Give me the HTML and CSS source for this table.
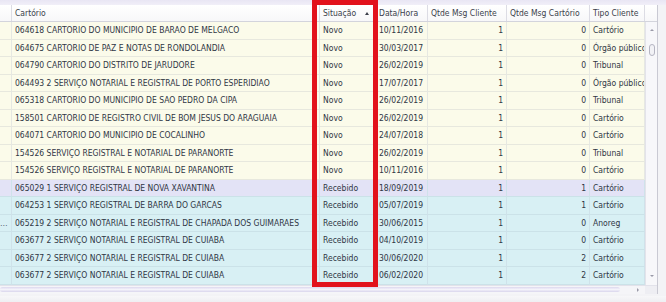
FILE: index.html
```html
<!DOCTYPE html>
<html lang="pt">
<head>
<meta charset="utf-8">
<title>Cartórios</title>
<link rel="stylesheet" href="styles.css">
</head>
<body>
<div class="screen">
  <div class="topbar"></div>
  <div class="panel">
    <div class="row head">
      <div class="c gut"></div>
      <div class="c">Cartório</div>
      <div class="c sort">Situação<span class="arrow"></span></div>
      <div class="c">Data/Hora</div>
      <div class="c">Qtde Msg Cliente</div>
      <div class="c">Qtde Msg Cartório</div>
      <div class="c">Tipo Cliente</div>
      <div class="c corner"></div>
    </div>
    <div class="bodywrap">
      <div class="rows">
        <div class="row novo"><div class="c gut"></div><div class="c">064618 CARTORIO DO MUNICIPIO DE BARAO DE MELGACO</div><div class="c">Novo</div><div class="c">10/11/2016</div><div class="c num">1</div><div class="c num">0</div><div class="c">Cartório</div></div>
        <div class="row novo"><div class="c gut"></div><div class="c">064675 CARTORIO DE PAZ E NOTAS DE RONDOLANDIA</div><div class="c">Novo</div><div class="c">30/03/2017</div><div class="c num">1</div><div class="c num">0</div><div class="c">Órgão público</div></div>
        <div class="row novo"><div class="c gut"></div><div class="c">064790 CARTORIO DO DISTRITO DE JARUDORE</div><div class="c">Novo</div><div class="c">26/02/2019</div><div class="c num">1</div><div class="c num">0</div><div class="c">Tribunal</div></div>
        <div class="row novo"><div class="c gut"></div><div class="c">064493 2 SERVIÇO NOTARIAL E REGISTRAL DE PORTO ESPERIDIAO</div><div class="c">Novo</div><div class="c">17/07/2017</div><div class="c num">1</div><div class="c num">0</div><div class="c">Órgão público</div></div>
        <div class="row novo"><div class="c gut"></div><div class="c">065318 CARTORIO DO MUNICIPIO DE SAO PEDRO DA CIPA</div><div class="c">Novo</div><div class="c">26/02/2019</div><div class="c num">1</div><div class="c num">0</div><div class="c">Tribunal</div></div>
        <div class="row novo"><div class="c gut"></div><div class="c">158501 CARTORIO DE REGISTRO CIVIL DE BOM JESUS DO ARAGUAIA</div><div class="c">Novo</div><div class="c">26/02/2019</div><div class="c num">1</div><div class="c num">0</div><div class="c">Cartório</div></div>
        <div class="row novo"><div class="c gut"></div><div class="c">064071 CARTORIO DO MUNICIPIO DE COCALINHO</div><div class="c">Novo</div><div class="c">24/07/2018</div><div class="c num">1</div><div class="c num">0</div><div class="c">Cartório</div></div>
        <div class="row novo"><div class="c gut"></div><div class="c">154526 SERVIÇO REGISTRAL E NOTARIAL DE PARANORTE</div><div class="c">Novo</div><div class="c">26/02/2019</div><div class="c num">1</div><div class="c num">0</div><div class="c">Tribunal</div></div>
        <div class="row novo"><div class="c gut"></div><div class="c">154526 SERVIÇO REGISTRAL E NOTARIAL DE PARANORTE</div><div class="c">Novo</div><div class="c">10/11/2016</div><div class="c num">1</div><div class="c num">0</div><div class="c">Cartório</div></div>
        <div class="row sel"><div class="c gut"></div><div class="c">065029 1 SERVIÇO REGISTRAL DE NOVA XAVANTINA</div><div class="c">Recebido</div><div class="c">18/09/2019</div><div class="c num">1</div><div class="c num">1</div><div class="c">Cartório</div></div>
        <div class="row rec"><div class="c gut"></div><div class="c">064253 1 SERVIÇO REGISTRAL DE BARRA DO GARCAS</div><div class="c">Recebido</div><div class="c">05/07/2019</div><div class="c num">1</div><div class="c num">1</div><div class="c">Cartório</div></div>
        <div class="row rec"><div class="c gut">…</div><div class="c">065219 2 SERVIÇO NOTARIAL E REGISTRAL DE CHAPADA DOS GUIMARAES</div><div class="c">Recebido</div><div class="c">30/06/2015</div><div class="c num">1</div><div class="c num">0</div><div class="c">Anoreg</div></div>
        <div class="row rec"><div class="c gut"></div><div class="c">063677 2 SERVIÇO NOTARIAL E REGISTRAL DE CUIABA</div><div class="c">Recebido</div><div class="c">04/10/2019</div><div class="c num">1</div><div class="c num">0</div><div class="c">Cartório</div></div>
        <div class="row rec"><div class="c gut"></div><div class="c">063677 2 SERVIÇO NOTARIAL E REGISTRAL DE CUIABA</div><div class="c">Recebido</div><div class="c">30/06/2020</div><div class="c num">1</div><div class="c num">2</div><div class="c">Cartório</div></div>
        <div class="row rec"><div class="c gut"></div><div class="c">063677 2 SERVIÇO NOTARIAL E REGISTRAL DE CUIABA</div><div class="c">Recebido</div><div class="c">06/02/2020</div><div class="c num">1</div><div class="c num">2</div><div class="c">Cartório</div></div>
      </div>
      <div class="vscroll">
        <span class="sarrow up"></span>
        <span class="vthumb"></span>
        <span class="sarrow down"></span>
      </div>
    </div>
    <div class="hbar">
      <div class="htrack"><span class="hthumb"></span><span class="sarrow right"></span></div>
      <div class="hcorner"></div>
    </div>
  </div>
  <div class="footer"></div>
  <div class="highlight"></div>
</div>
</body>
</html>
```

FILE: styles.css
```css
html, body {
  margin: 0;
  padding: 0;
}
body {
  background: #f3f3f6;
  font-family: "DejaVu Sans Condensed", "DejaVu Sans", sans-serif;
  font-stretch: condensed;
  font-size: 8.5px;
  color: #2f3644;
}
.screen {
  position: relative;
  width: 666px;
  height: 302px;
  overflow: hidden;
}
.topbar {
  height: 5px;
  background: linear-gradient(#e9e6f4, #f1eff8);
}
.panel {
  width: 657px;
  border-right: 1px solid #c9c9d3;
  background: #ffffff;
}
.row {
  display: grid;
  grid-template-columns: 12px 308px 56px 52px 79px 83px 55px;
  height: 17.5px;
}
.row.head {
  grid-template-columns: 12px 308px 56px 52px 79px 83px 55px 12px;
  height: 17px;
  background: linear-gradient(#ffffff, #f7f7f9);
  border-bottom: 1px solid #d3d4dc;
  box-sizing: border-box;
}
.c {
  display: flex;
  align-items: center;
  padding: 0 3px;
  white-space: nowrap;
  overflow: hidden;
  border-right: 1px solid #dfe3e8;
  border-bottom: 1px solid #e1e5ea;
  box-sizing: border-box;
}
.head .c {
  border-bottom: none;
  border-right: 1px solid #dcdce4;
  color: #3a3f4b;
}
.c.num {
  justify-content: flex-end;
}
.c.gut {
  padding: 0;
  justify-content: flex-start;
  color: #56606e;
  letter-spacing: -1px;
}
.sort {
  justify-content: space-between;
}
.arrow {
  width: 0;
  height: 0;
  border-left: 2.5px solid transparent;
  border-right: 2.5px solid transparent;
  border-bottom: 3px solid #3b3f4a;
  margin-right: 3px;
}
.head .corner {
  border-right: none;
}
.novo { background: #fbfbea; }
.rec { background: #d8f0f4; }
.sel { background: #e3e3f6; }
.novo .c { border-right-color: #e6e8e2; border-bottom-color: #e7e8de; }
.rec .c, .sel .c { border-right-color: #cfe2ea; border-bottom-color: #cbe2e8; }
.bodywrap {
  display: flex;
}
.rows {
  width: 645px;
}
.vscroll {
  width: 12px;
  height: 262.5px;
  background: #f7f7fa;
  border-left: 1px solid #e3e3ea;
  box-sizing: border-box;
  display: flex;
  flex-direction: column;
  align-items: center;
  padding-top: 7px;
}
.sarrow {
  width: 0;
  height: 0;
  border-left: 2px solid transparent;
  border-right: 2px solid transparent;
}
.sarrow.up { border-bottom: 2px solid #9a9aa8; }
.sarrow.down { border-top: 2px solid #9a9aa8; margin-top: auto; margin-bottom: 8px; }
.sarrow.right {
  border: none;
  border-top: 2px solid transparent;
  border-bottom: 2px solid transparent;
  border-left: 2px solid #9a9aa8;
  margin-left: auto;
  margin-right: 6px;
}
.vthumb {
  width: 4px;
  height: 10px;
  margin-top: 13px;
  border: 1px solid #b5b5c2;
  border-radius: 3px;
  background: #f2f2f6;
}
.hbar {
  display: flex;
  height: 8px;
  background: #f5f5f8;
  border-top: 1px solid #e2e2ea;
}
.htrack {
  width: 645px;
  display: flex;
  align-items: center;
}
.hthumb {
  width: 620px;
  height: 5px;
  border-radius: 3px;
  background: linear-gradient(#dcd8ee, #f4f3fa 50%, #d9d5ec);
}
.hcorner {
  width: 12px;
  background: #eeeef3;
}
.footer {
  height: 8px;
  margin-top: 2px;
  background: linear-gradient(#f7f7f9, #ececf0);
}
.highlight {
  position: absolute;
  left: 312px;
  top: 0;
  width: 66px;
  height: 287px;
  border: 5px solid #e2121c;
  box-sizing: border-box;
}
```
